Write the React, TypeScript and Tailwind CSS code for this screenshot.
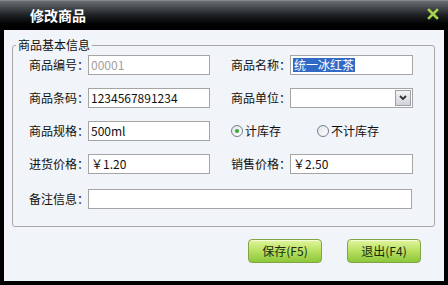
import React from "react";

const font = { fontFamily: '"Noto Sans CJK SC", "Liberation Sans", sans-serif' };

function Field({ label, children }: { label: string; children: React.ReactNode }) {
  return (
    <div className="flex items-center h-[20px]">
      <span className="w-[59px] text-[12px] text-[#111] leading-none whitespace-nowrap">{label}</span>
      {children}
    </div>
  );
}

function TextBox({ value, gray, selected, w }: { value?: string; gray?: boolean; selected?: boolean; w: string }) {
  return (
    <div className={`${w} h-[20px] border border-[#a5a5a5] bg-white flex items-center px-[2px] text-[12px] leading-none`}>
      {selected ? (
        <span className="bg-[#3169c6] text-white px-[1px] leading-[14px]">{value}</span>
      ) : (
        <span className={gray ? "text-[#a0a0a0]" : "text-[#111]"}>{value}</span>
      )}
    </div>
  );
}

function Radio({ label, checked }: { label: string; checked?: boolean }) {
  return (
    <div className="flex items-center gap-[2px] text-[12px] text-[#111] shrink-0 whitespace-nowrap">
      <span className="w-[12px] h-[12px] rounded-full border border-[#6f8090] bg-gradient-to-br from-[#dfe3e8] to-white flex items-center justify-center">
        {checked && <span className="w-[4px] h-[4px] rounded-full bg-[#3aa63a]" />}
      </span>
      <span className="leading-none">{label}</span>
    </div>
  );
}

function GreenButton({ children }: { children: React.ReactNode }) {
  return (
    <button className="w-[74px] h-[24px] rounded-[4px] border border-[#7ea444] bg-gradient-to-b from-[#e2f59c] via-[#b7e060] to-[#8dc73a] text-[12px] text-[#1b2a10] shadow-[inset_0_1px_0_rgba(255,255,255,0.6)]">
      {children}
    </button>
  );
}

export default function App() {
  return (
    <div className="w-[448px] h-[285px] bg-black flex flex-col" style={font}>
      <div className="h-[30px] flex items-center bg-gradient-to-b from-[#6a6f73] via-[#1d2023] to-black border-t border-[#888]">
        <div className="w-[30px] shrink-0" />
        <span className="text-white font-bold text-[14px] whitespace-nowrap">修改商品</span>
        <svg width="12" height="12" viewBox="0 0 12 12" className="ml-auto mr-[9px] mb-[3px]">
          <path d="M2 2 L10 10 M10 2 L2 10" stroke="#a6d24c" strokeWidth="2.6" strokeLinecap="square" />
        </svg>
      </div>
      <div className="flex-1 mx-[4px] mb-[4px] bg-[#f1f4f8] flex flex-col px-[8px] pt-[8px]">
        <fieldset className="border border-[#a8a8a8] rounded-[3px] w-[423px] pl-[16px] pr-[21px] pb-[17px] pt-[3px]">
          <legend className="-ml-[13px] px-[2px] text-[12px] leading-[14px] text-[#111]">商品基本信息</legend>
          <div className="flex flex-col gap-[13px]">
            <div className="flex justify-between">
              <Field label="商品编号：">
                <TextBox value="00001" gray w="w-[122px]" />
              </Field>
              <Field label="商品名称：">
                <TextBox value="统一冰红茶" selected w="w-[123px]" />
              </Field>
            </div>
            <div className="flex justify-between">
              <Field label="商品条码：">
                <TextBox value="1234567891234" w="w-[122px]" />
              </Field>
              <Field label="商品单位：">
                <div className="w-[123px] h-[20px] border border-[#a5a5a5] bg-white flex items-center justify-end pr-[1px]">
                  <div className="w-[16px] h-[16px] border border-[#9aa0a8] bg-gradient-to-b from-[#f4f4f6] to-[#cfd3da] flex items-center justify-center">
                    <svg width="8" height="6" viewBox="0 0 8 6">
                      <path d="M1 1 L4 4 L7 1" stroke="#333" strokeWidth="1.8" fill="none" />
                    </svg>
                  </div>
                </div>
              </Field>
            </div>
            <div className="flex justify-between">
              <Field label="商品规格：">
                <TextBox value="500ml" w="w-[122px]" />
              </Field>
              <div className="w-[182px] flex items-center h-[20px] gap-[36px]">
                <Radio label="计库存" checked />
                <Radio label="不计库存" />
              </div>
            </div>
            <div className="flex justify-between">
              <Field label="进货价格：">
                <TextBox value="￥1.20" w="w-[122px]" />
              </Field>
              <Field label="销售价格：">
                <TextBox value="￥2.50" w="w-[123px]" />
              </Field>
            </div>
            <div className="mt-[2px]">
              <Field label="备注信息：">
                <TextBox w="w-[324px]" />
              </Field>
            </div>
          </div>
        </fieldset>
        <div className="flex justify-end gap-[25px] pr-[15px] mt-[12px]">
          <GreenButton>保存(F5)</GreenButton>
          <GreenButton>退出(F4)</GreenButton>
        </div>
      </div>
    </div>
  );
}
